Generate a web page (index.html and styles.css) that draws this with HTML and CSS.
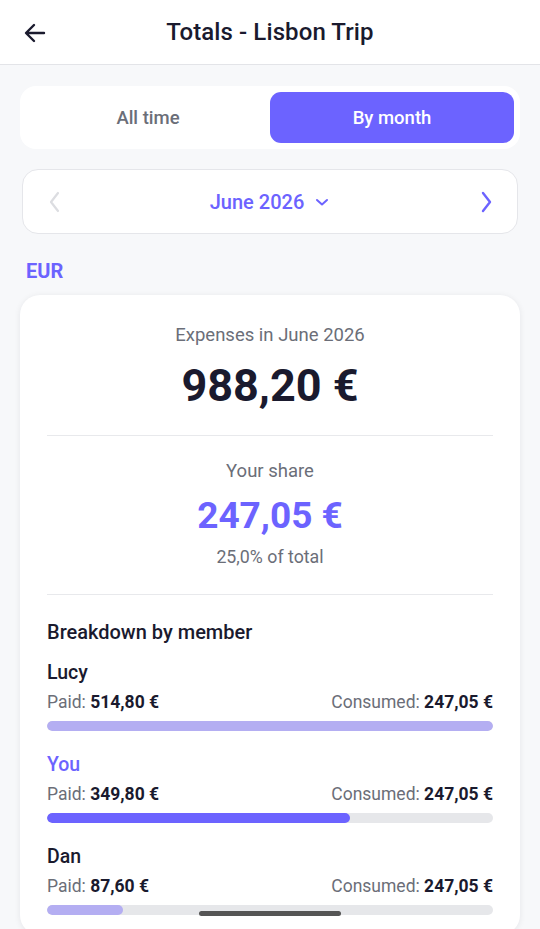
FILE: index.html
```html
<!DOCTYPE html>
<html lang="en">
<head>
<meta charset="utf-8">
<meta name="viewport" content="width=device-width, initial-scale=1">
<link rel="stylesheet" href="styles.css">
<title>Totals - Lisbon Trip</title>
</head>
<body>
<header class="topbar">
  <button class="back" aria-label="Back">
    <svg width="26" height="26" viewBox="0 0 26 26" fill="none" stroke="#1a1a2e" stroke-width="2.4" stroke-linecap="round" stroke-linejoin="round"><path d="M22 13H4.5M12 5l-8 8 8 8"/></svg>
  </button>
  <h1 class="title">Totals - Lisbon Trip</h1>
</header>
<main class="content">
  <div class="segmented">
    <button class="seg">All time</button>
    <button class="seg active">By month</button>
  </div>
  <div class="month">
    <svg class="chev" width="14" height="22" viewBox="0 0 14 22" fill="none" stroke="#dcdde1" stroke-width="2.2" stroke-linecap="round" stroke-linejoin="round"><path d="M10 2L3 11l7 9"/></svg>
    <div class="month-label">June 2026
      <svg width="14" height="10" viewBox="0 0 14 10" fill="none" stroke="#6c63ff" stroke-width="2" stroke-linecap="round" stroke-linejoin="round"><path d="M2 3l5 4.5L12 3"/></svg>
    </div>
    <svg class="chev" width="14" height="22" viewBox="0 0 14 22" fill="none" stroke="#6c63ff" stroke-width="2.4" stroke-linecap="round" stroke-linejoin="round"><path d="M4 2l7 9-7 9"/></svg>
  </div>
  <div class="currency">EUR</div>
  <section class="card">
    <div class="summary">
      <div class="label">Expenses in June 2026</div>
      <div class="total">988,20 €</div>
    </div>
    <div class="summary share">
      <div class="label">Your share</div>
      <div class="share-amt">247,05 €</div>
      <div class="pct">25,0% of total</div>
    </div>
    <div class="breakdown">
      <h2 class="bd-title">Breakdown by member</h2>
      <div class="member">
        <div class="name">Lucy</div>
        <div class="row"><span>Paid: <b>514,80 €</b></span><span>Consumed: <b>247,05 €</b></span></div>
        <div class="bar"><div class="fill light" style="width:100%"></div></div>
      </div>
      <div class="member">
        <div class="name me">You</div>
        <div class="row"><span>Paid: <b>349,80 €</b></span><span>Consumed: <b>247,05 €</b></span></div>
        <div class="bar"><div class="fill" style="width:67.9%"></div></div>
      </div>
      <div class="member">
        <div class="name">Dan</div>
        <div class="row"><span>Paid: <b>87,60 €</b></span><span>Consumed: <b>247,05 €</b></span></div>
        <div class="bar"><div class="fill light" style="width:17%"></div></div>
      </div>
    </div>
  </section>
</main>
<div class="home-indicator"></div>
</body>
</html>
```
FILE: styles.css
```css
* { box-sizing: border-box; }
html, body { margin: 0; padding: 0; }
body {
  font-family: Roboto, "Noto Sans", sans-serif;
  background: #f7f8fa;
  color: #1a1a2e;
  width: 540px;
  height: 929px;
  overflow: hidden;
  position: relative;
}
.topbar {
  height: 65px;
  background: #fff;
  border-bottom: 1px solid #e3e4e8;
  display: flex;
  align-items: center;
  justify-content: center;
  position: relative;
}
.back {
  position: absolute;
  left: 22px;
  top: 20px;
  background: none;
  border: 0;
  padding: 0;
  width: 26px;
  height: 26px;
  display: flex;
}
.title {
  margin: 0;
  font-size: 24px;
  font-weight: 500;
  color: #1a1a2e;
  letter-spacing: 0.1px;
}
.content {
  padding: 21px 20px 0;
  display: flex;
  flex-direction: column;
}
.segmented {
  background: #fff;
  border-radius: 16px;
  padding: 6px;
  display: grid;
  grid-template-columns: 1fr 1fr;
  gap: 0;
  height: 63px;
}
.seg {
  border: 0;
  background: transparent;
  font-family: inherit;
  font-size: 18.5px;
  font-weight: 500;
  color: #6b6e78;
  border-radius: 11px;
}
.seg.active {
  background: #6c63ff;
  color: #fff;
}
.month {
  margin: 20px 2px 0;
  height: 65px;
  background: #fff;
  border: 1px solid #e5e6ea;
  border-radius: 16px;
  display: flex;
  align-items: center;
  justify-content: space-between;
  padding: 0 24px 0 25px;
}
.chev { display: block; }
.month-label {
  display: flex;
  align-items: center;
  gap: 11px;
  color: #6c63ff;
  font-size: 20px;
  font-weight: 500;
  margin-left: -2px;
}
.currency {
  margin: 26px 0 0 6px;
  color: #6c63ff;
  font-size: 20px;
  font-weight: 700;
  line-height: 22px;
}
.card {
  margin-top: 13px;
  background: #fff;
  border-radius: 20px;
  box-shadow: 0 1px 6px rgba(20, 20, 40, 0.08);
  padding: 0 27px 20px;
}
.summary {
  text-align: center;
  padding: 29px 0 24px;
  border-bottom: 1px solid #e8e9ec;
}
.label {
  font-size: 18.5px;
  color: #6b6e78;
  line-height: 22px;
}
.total {
  margin-top: 15px;
  font-size: 45px;
  font-weight: 700;
  line-height: 50px;
  color: #1a1a2e;
}
.share { padding-top: 24px; padding-bottom: 26px; }
.share-amt {
  margin-top: 12px;
  font-size: 37px;
  font-weight: 700;
  line-height: 44px;
  color: #6c63ff;
}
.pct {
  margin-top: 8px;
  font-size: 17.8px;
  color: #6b6e78;
  line-height: 22px;
}
.breakdown { padding-top: 25px; }
.bd-title {
  margin: 0;
  font-size: 20px;
  font-weight: 500;
  line-height: 24px;
  color: #1a1a2e;
}
.member { margin-top: 17px; }
.member + .member { margin-top: 22px; }
.name {
  font-size: 19.5px;
  font-weight: 500;
  line-height: 24px;
  color: #1a1a2e;
}
.name.me { color: #6c63ff; }
.row {
  margin-top: 6px;
  display: flex;
  justify-content: space-between;
  font-size: 17.5px;
  line-height: 22px;
  color: #6b6e78;
}
.row b { color: #1a1a2e; font-weight: 700; }
.bar {
  margin-top: 8px;
  height: 10px;
  border-radius: 5px;
  background: #e6e7ea;
  overflow: hidden;
}
.fill {
  height: 100%;
  border-radius: 5px;
  background: #6c63ff;
}
.fill.light { background: #b4aef2; }
.home-indicator {
  position: absolute;
  left: 199px;
  bottom: 13px;
  width: 142px;
  height: 5px;
  border-radius: 3px;
  background: #555;
}
```
